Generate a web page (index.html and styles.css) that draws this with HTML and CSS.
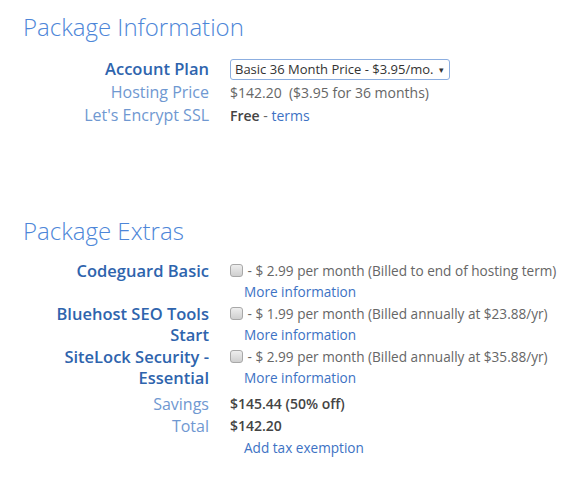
FILE: index.html
```html
<!DOCTYPE html>
<html>
<head>
<meta charset="utf-8">
<link rel="stylesheet" href="styles.css">
</head>
<body>
<section class="section">
  <h2 class="title">Package Information</h2>
  <div class="grid igrid">
    <div class="label strong">Account Plan</div>
    <div class="value"><div class="select"><span class="opt">Basic 36 Month Price - $3.95/mo.</span><span class="arrow">&#9662;</span></div></div>
    <div class="label">Hosting Price</div>
    <div class="value">$142.20 &nbsp;($3.95 for 36 months)</div>
    <div class="label">Let's Encrypt SSL</div>
    <div class="value"><b class="bold">Free</b> - <a class="link">terms</a></div>
  </div>
</section>
<section class="section extras">
  <h2 class="title">Package Extras</h2>
  <div class="grid xgrid">
    <div class="label strong">Codeguard Basic</div>
    <div class="value"><span class="cb"></span> - $ 2.99 per month (Billed to end of hosting term)<br><a class="link more">More information</a></div>
    <div class="label strong">Bluehost SEO Tools Start</div>
    <div class="value"><span class="cb"></span> - $ 1.99 per month (Billed annually at $23.88/yr)<br><a class="link more">More information</a></div>
    <div class="label strong">SiteLock Security - Essential</div>
    <div class="value"><span class="cb"></span> - $ 2.99 per month (Billed annually at $35.88/yr)<br><a class="link more">More information</a></div>
  </div>
  <div class="grid tgrid">
    <div class="label">Savings</div>
    <div class="value"><b class="bold">$145.44 (50% off)</b></div>
    <div class="label">Total</div>
    <div class="value"><b class="bold">$142.20</b></div>
    <div class="label"></div>
    <div class="value"><a class="link more">Add tax exemption</a></div>
  </div>
</section>
</body>
</html>
```
FILE: styles.css
```css
html, body { margin: 0; padding: 0; background: #fff; }
body { font-family: "Open Sans", "Liberation Sans", sans-serif; color: #555; }
.section { padding-left: 23px; }
.title { font-weight: 300; font-size: 24px; color: #4d86d8; margin: 0; padding-top: 11px; line-height: 32px; }
.extras .title { padding-top: 0; margin-top: 88px; }
.grid { display: grid; grid-template-columns: 160px 1fr; column-gap: 21px; margin-left: 26px; align-items: start; }
.igrid { margin-top: 14px; }
.label { text-align: right; font-size: 16px; line-height: 23px; color: #6f98d1; }
.label.strong { font-weight: 600; font-size: 16.5px; color: #2e64ad; line-height: 21px; }
.igrid .label.strong { line-height: 24px; }
.value { font-size: 14px; line-height: 23px; color: #666; }
.select { display: inline-flex; align-items: center; justify-content: space-between; width: 220px; height: 21px; margin-top: 2px; box-sizing: border-box; border: 1px solid #8caee0; border-radius: 3px; padding: 0 5px 0 4px; color: #333; line-height: 17px; white-space: nowrap; vertical-align: top; }
.opt { font-size: 13px; }
.arrow { font-size: 9px; color: #333; }
.bold { font-weight: 600; color: #444; }
.link { color: #3d72c4; }
.cb { display: inline-block; width: 11px; height: 11px; border: 1px solid #a8a8a8; border-radius: 3px; background: linear-gradient(#eeeeee, #cfcfcf); vertical-align: -1px; margin-right: 1px; }
.more { display: inline-block; margin-left: 14px; font-size: 13.6px; }
.xgrid { margin-top: 13px; row-gap: 1px; }
.xgrid .value { line-height: 21px; font-size: 13.6px; }
.tgrid { margin-top: 5px; }
.tgrid .label, .tgrid .value { line-height: 22px; }
```
